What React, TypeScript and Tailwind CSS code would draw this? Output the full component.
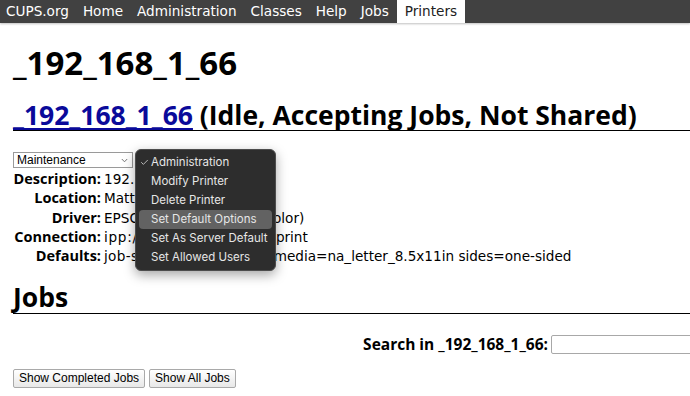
import { Check } from "lucide-react";

const navItems = ["CUPS.org", "Home", "Administration", "Classes", "Help", "Jobs"];

const menuItems = [
  "Administration",
  "Modify Printer",
  "Delete Printer",
  "Set Default Options",
  "Set As Server Default",
  "Set Allowed Users",
];

// hidden part of each value sits under the popup menu; tracking keeps the visible tail in place
const details = [
  { label: "Description:", value: "192.168.1.66", tail: "" },
  { label: "Location:", value: "Matt's Office", tail: "" },
  { label: "Driver:", value: "EPSON ET-3750 Series (", tail: "color)" },
  { label: "Connection:", value: "ipp://192.168.1.66/ipp/", tail: "print", track: "tracking-[0.7px]" },
  {
    label: "Defaults:",
    value: "job-sheets=none, none ",
    tail: "media=na_letter_8.5x11in sides=one-sided",
    track: "tracking-[0.32px]",
  },
];

function NavBar() {
  return (
    <div className="flex h-[23px] bg-[#414141] text-[13.6px] leading-[23px] text-white shadow-[0_1px_2px_rgba(0,0,0,0.25)] font-['DejaVu_Sans',sans-serif]">
      {navItems.map((item, i) => (
        <span key={item} className={i === 0 ? "pl-[6px] pr-[7px]" : "px-[7px]"}>
          {item}
        </span>
      ))}
      <span className="ml-[1px] bg-white px-[8px] text-[#222]">Printers</span>
    </div>
  );
}

function MaintenanceMenu() {
  return (
    <div className="absolute left-[122px] top-[-3px] z-10 w-[141px] rounded-[6px] border border-[#4d4d4d] bg-[#2d2d2d] py-[3px] text-[11.5px] leading-[19px] text-[#e6e6e6] shadow-[0_4px_12px_rgba(0,0,0,0.35)] font-['Inter',sans-serif]">
      {menuItems.map((item, i) => (
        <div
          key={item}
          className={
            "mx-[3px] flex h-[19px] items-center rounded-[4px] " +
            (i === 3 ? "bg-[#626262]" : "")
          }
        >
          <span className="flex w-[12px] pl-[1px]">
            {i === 0 && <Check size={9} strokeWidth={2} />}
          </span>
          <span>{item}</span>
        </div>
      ))}
    </div>
  );
}

export default function App() {
  return (
    <div className="h-[396px] w-[690px] overflow-hidden bg-white text-black">
      <NavBar />

      <div className="pl-[13px]">
        <h1 className="mt-[23px] text-[33px] font-bold leading-[33px] font-['Open_Sans',sans-serif]">
          _192_168_1_66
        </h1>

        <h2 className="mt-[22.5px] border-b border-black pb-[2px] text-[26.5px] font-bold leading-[26.5px] font-['Open_Sans',sans-serif]">
          <a className="text-[#0a0a9a] underline decoration-[1.5px] underline-offset-[3px]">
            _192_168_1_66
          </a>{" "}
          (Idle, Accepting Jobs, Not Shared)
        </h2>

        <div className="relative mt-[21px]">
          <div className="flex h-[16px] w-[120px] items-center justify-between border border-[#9a9a9a] bg-white pl-[3px] pr-[4px] text-[12px] font-['Liberation_Sans',sans-serif]">
            <span>Maintenance</span>
            <svg width="7" height="5" viewBox="0 0 7 5" className="text-[#777]">
              <path d="M0.8 1 L3.5 3.8 L6.2 1" fill="none" stroke="currentColor" strokeWidth="1" />
            </svg>
          </div>
          <MaintenanceMenu />

          <div className="mt-[2px] grid grid-cols-[88px_1fr] items-baseline gap-x-[3px]">
            {details.map((d) => (
              <div key={d.label} className="contents">
                <span className="text-right text-[14.5px] font-bold leading-[17.5px] font-['Open_Sans',sans-serif]">
                  {d.label}
                </span>
                <span className="whitespace-nowrap text-[13.6px] leading-[19.3px] font-['DejaVu_Sans',sans-serif]">
                  <span className={d.track}>{d.value}</span>
                  {d.tail}
                </span>
              </div>
            ))}
          </div>
        </div>

        <h2 className="mt-[18px] border-b border-black pb-[2px] text-[26.5px] font-bold leading-[26.5px] font-['Open_Sans',sans-serif]">
          Jobs
        </h2>

        <div className="mr-[-60px] mt-[21px] flex h-[19px] items-center justify-end gap-[3px]">
          <span className="text-[15.5px] font-bold leading-[19px] font-['Open_Sans',sans-serif]">
            Search in _192_168_1_66:
          </span>
          <div className="h-[19px] w-[199px] rounded-[2px] border border-[#a8a8a8] bg-white" />
        </div>

        <div className="mt-[15px] flex gap-[4px] text-[12px] font-['Liberation_Sans',sans-serif]">
          <button className="h-[19px] rounded-[2px] border border-[#a9a9a9] bg-linear-to-b from-white to-[#e8e8e8] px-[5px] leading-[17px]">
            Show Completed Jobs
          </button>
          <button className="h-[19px] rounded-[2px] border border-[#a9a9a9] bg-linear-to-b from-white to-[#e8e8e8] px-[5px] leading-[17px]">
            Show All Jobs
          </button>
        </div>
      </div>
    </div>
  );
}
